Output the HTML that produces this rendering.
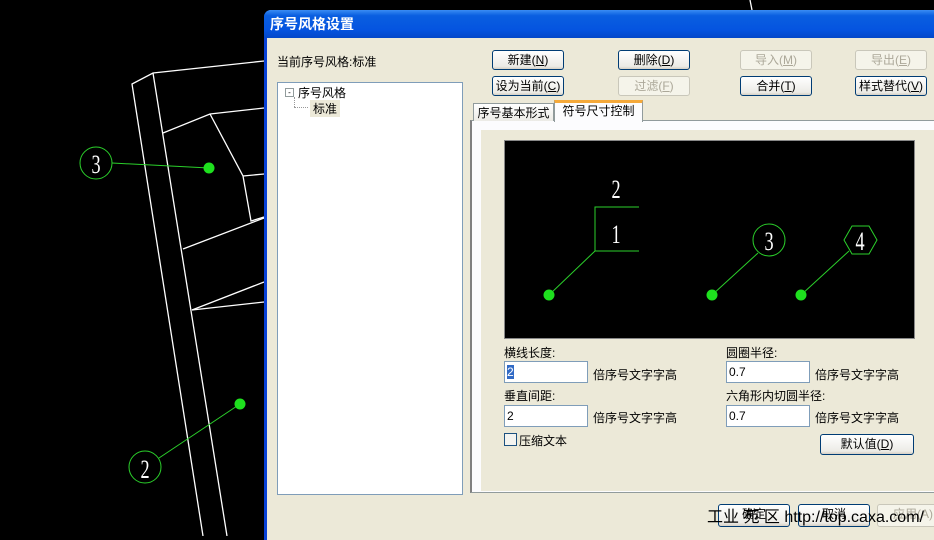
<!DOCTYPE html>
<html><head><meta charset="utf-8"><style>
*{margin:0;padding:0;box-sizing:border-box}
body{width:934px;height:536px;overflow:hidden;background:#000;position:relative;font-family:"Liberation Sans","Noto Sans CJK SC","WenQuanYi Zen Hei",sans-serif;font-size:12px;color:#000}
.a{position:absolute}
.btn{position:absolute;height:20px;width:72px;border:1px solid #003c74;border-radius:3px;background:linear-gradient(#fff,#ecebe6 85%,#d6d0c5);text-align:center;line-height:18px;font-size:12px}
.dis{border-color:#c9c7ba;color:#aca899;background:#f5f4ea}
.inp{position:absolute;width:84px;height:22px;border:1px solid #7f9db9;background:#fff;padding-left:2px;line-height:20px;font-size:12px}
</style></head><body>
<svg class="a" style="left:0;top:0" width="934" height="536">
<g stroke="#fff" stroke-width="1.3" fill="none">
<polyline points="203,536 132,84 153,73 264,61"/>
<line x1="153" y1="73" x2="227" y2="536"/>
<polyline points="163,133 210,114 264,108"/>
<polyline points="210,114 243,176 251,221 264,217"/>
<line x1="243" y1="176" x2="264" y2="174"/>
<line x1="183" y1="249" x2="264" y2="218"/>
<polyline points="192,310 264,282"/>
<line x1="192" y1="310" x2="264" y2="302"/>
<line x1="626" y1="22" x2="690" y2="14"/>
<line x1="750" y1="0" x2="752" y2="10"/>
</g>
<g stroke="#2bd02b" fill="none" stroke-width="1">
<circle cx="96" cy="163" r="16"/><line x1="112" y1="163" x2="209" y2="168"/>
<circle cx="145" cy="467" r="16"/><line x1="159" y1="458" x2="240" y2="404"/>
</g>
<circle cx="209" cy="168" r="5.5" fill="#1ee01e"/><circle cx="240" cy="404" r="5.5" fill="#1ee01e"/>
<g fill="#fff" font-family="Liberation Serif" font-size="26" text-anchor="middle">
<text transform="translate(96,173) scale(0.7,1)">3</text>
<text transform="translate(145,478) scale(0.7,1)">2</text>
</g>
</svg>
<div class="a" style="left:264px;top:10px;width:680px;height:530px;background:#ece9d8;border-left:3px solid #0841d6;border-radius:7px 0 0 0"></div>
<div class="a" style="left:264px;top:10px;width:680px;height:28px;background:linear-gradient(#3a8cf3,#0a5fe0 20%,#0554e0 70%,#0347c9);border-radius:7px 0 0 0;color:#fff;font-weight:bold;font-size:14px;line-height:28px;padding-left:6px">序号风格设置</div>
<div class="a" style="left:277px;top:53px;font-size:12px">当前序号风格:标准</div>
<div class="a" style="left:277px;top:82px;width:186px;height:413px;background:#fff;border:1px solid #7f9db9"></div>
<div class="a" style="left:285px;top:88px;width:9px;height:9px;border:1px solid #919b9c;font-size:8px;line-height:7px;text-align:center">-</div>
<div class="a" style="left:298px;top:84px">序号风格</div>
<div class="a" style="left:294px;top:97px;width:1px;height:10px;border-left:1px dotted #999"></div>
<div class="a" style="left:294px;top:107px;width:14px;border-top:1px dotted #999"></div>
<div class="a" style="left:310px;top:100px;background:#ece9d8;padding:0 3px">标准</div>
<div class="btn" style="left:492px;top:50px">新建(<u>N</u>)</div>
<div class="btn" style="left:618px;top:50px">删除(<u>D</u>)</div>
<div class="btn dis" style="left:740px;top:50px">导入(<u>M</u>)</div>
<div class="btn dis" style="left:855px;top:50px">导出(<u>E</u>)</div>
<div class="btn" style="left:492px;top:76px">设为当前(<u>C</u>)</div>
<div class="btn dis" style="left:618px;top:76px">过滤(<u>F</u>)</div>
<div class="btn" style="left:740px;top:76px">合并(<u>T</u>)</div>
<div class="btn" style="left:855px;top:76px">样式替代(<u>V</u>)</div>
<div class="a" style="left:470px;top:120px;width:470px;height:373px;background:#fcfcfe;border:1px solid #919b9c;border-left:2px solid #808080"></div>
<div class="a" style="left:481px;top:130px;width:460px;height:361px;background:#ece9d8"></div>
<div class="a" style="left:473px;top:103px;width:81px;height:18px;border:1px solid #919b9c;border-bottom:none;background:linear-gradient(#fff,#ecebe6);text-align:center;line-height:18px">序号基本形式</div>
<div class="a" style="left:554px;top:100px;width:89px;height:22px;border:1px solid #919b9c;border-top:3px solid #f5a93a;border-bottom:none;background:#fcfcfe;text-align:center;line-height:17px">符号尺寸控制</div>
<div class="a" style="left:504px;top:140px;width:411px;height:199px;background:#000;border:1px solid #888"></div>
<svg class="a" style="left:504px;top:140px" width="411" height="199">
<g stroke="#2bd02b" fill="none" stroke-width="1">
<polyline points="135,67 91,67 91,111 135,111"/>
<line x1="91" y1="111" x2="45" y2="155"/>
<circle cx="265" cy="100" r="16"/><line x1="254" y1="113" x2="208" y2="155"/>
<polygon points="340,100 348,86 365,86 373,100 365,114 348,114"/><line x1="345" y1="111" x2="297" y2="155"/>
</g>
<circle cx="45" cy="155" r="5.5" fill="#1ee01e"/><circle cx="208" cy="155" r="5.5" fill="#1ee01e"/><circle cx="297" cy="155" r="5.5" fill="#1ee01e"/>
<g fill="#fff" font-family="Liberation Serif" font-size="26" text-anchor="middle">
<text transform="translate(112,58) scale(0.7,1)">2</text>
<text transform="translate(112,103) scale(0.7,1)">1</text>
<text transform="translate(265,110) scale(0.7,1)">3</text>
<text transform="translate(356,110) scale(0.7,1)">4</text>
</g>
</svg>
<div class="a" style="left:504px;top:344px">横线长度:</div>
<div class="inp" style="left:504px;top:361px"><span style="background:#316ac5;color:#fff">2</span></div>
<div class="a" style="left:593px;top:366px">倍序号文字字高</div>
<div class="a" style="left:504px;top:387px">垂直间距:</div>
<div class="inp" style="left:504px;top:405px">2</div>
<div class="a" style="left:593px;top:409px">倍序号文字字高</div>
<div class="a" style="left:504px;top:433px;width:13px;height:13px;border:1px solid #1c5180;background:#f4f4f0"></div>
<div class="a" style="left:519px;top:432px">压缩文本</div>
<div class="a" style="left:726px;top:344px">圆圈半径:</div>
<div class="inp" style="left:726px;top:361px">0.7</div>
<div class="a" style="left:815px;top:366px">倍序号文字字高</div>
<div class="a" style="left:726px;top:387px">六角形内切圆半径:</div>
<div class="inp" style="left:726px;top:405px">0.7</div>
<div class="a" style="left:815px;top:409px">倍序号文字字高</div>
<div class="btn" style="left:820px;top:434px;width:94px;height:21px">默认值(<u>D</u>)</div>
<div class="btn" style="left:718px;top:504px;height:23px">确定</div>
<div class="btn" style="left:798px;top:504px;height:23px">取消</div>
<div class="btn dis" style="left:877px;top:504px;height:23px">应用(A)</div>
<div class="a" style="left:707px;top:509px;font-size:16px;line-height:18px;color:#000">工业 苑 区 http://top.caxa.com/</div>
</body></html>
